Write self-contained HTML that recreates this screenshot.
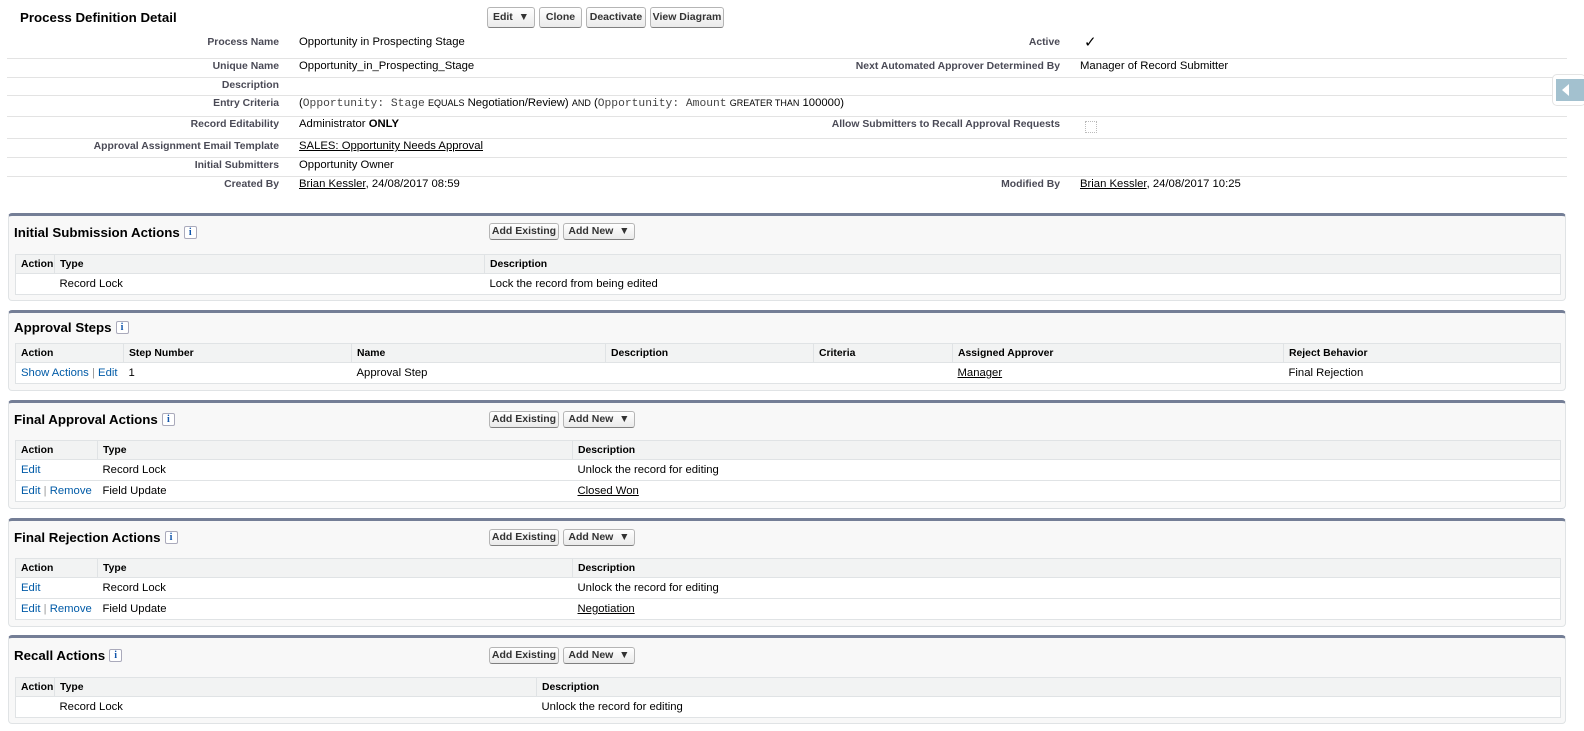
<!DOCTYPE html>
<html><head><meta charset="utf-8"><style>
*{box-sizing:border-box;margin:0;padding:0}
body{width:1584px;height:731px;background:#fff;font-family:"Liberation Sans",Arial,sans-serif;color:#000;position:relative;overflow:hidden;font-size:11.3px}
.a{position:absolute;white-space:nowrap}
.title{font-weight:bold;font-size:13.3px;color:#000}
.btn{position:absolute;height:21px;border:1px solid #b5b5b5;border-bottom-color:#7f7f7f;border-radius:3px;background:linear-gradient(#fff,#eaeaea);font-weight:bold;font-size:10.5px;color:#333;text-align:center;line-height:19px}
.sbtn{height:17px;line-height:15px}
.row{position:absolute;left:7px;width:1560px;border-bottom:1px solid #e3e3e3}
.lbl{position:absolute;text-align:right;font-weight:bold;font-size:10.4px;color:#4a4a56;white-space:nowrap}
.val{position:absolute;white-space:nowrap}
u{text-decoration:underline}
.mono{font-family:"Liberation Mono",monospace;font-size:11.3px;color:#444}
.sm{font-size:9px}
.sec{position:absolute;left:8px;width:1558px;background:#f8f8f8;border:1px solid #e0e3e5;border-top:3px solid #747e96;border-radius:4px}
.info{display:inline-block;width:13px;height:13px;border:1px solid #aab;border-radius:2px;background:#fff;color:#15a;font-family:"Liberation Serif",serif;font-size:10px;font-weight:bold;text-align:center;line-height:11px;vertical-align:2px;margin-left:4px}
table{position:absolute;left:6px;border-collapse:collapse;background:#fff;width:1546px;table-layout:fixed}
td,th{border-top:1px solid #e0e3e5;border-bottom:1px solid #e0e3e5;text-align:left;padding:0 0 0 5px;white-space:nowrap;overflow:hidden;font-size:11.3px}
th{background:#f2f3f3;font-weight:bold;font-size:10.4px;color:#000;height:19px;border-left:1px solid #e0e3e5}
th:first-child,td:first-child{border-left:1px solid #e0e3e5}
th:last-child,td:last-child{border-right:1px solid #e0e3e5}
td{height:21px}
a{color:#015ba7;text-decoration:none}
</style></head><body>

<div class="a title" style="left:20px;top:10px">Process Definition Detail</div>
<div class="btn" style="left:487px;top:7px;width:48px">Edit &nbsp;▼</div>
<div class="btn" style="left:539px;top:7px;width:43px">Clone</div>
<div class="btn" style="left:586px;top:7px;width:60px">Deactivate</div>
<div class="btn" style="left:650px;top:7px;width:74px">View Diagram</div>

<div class="row" style="top:31px;height:28px"></div>
<div class="row" style="top:59px;height:19px"></div>
<div class="row" style="top:78px;height:18px"></div>
<div class="row" style="top:96px;height:21px"></div>
<div class="row" style="top:117px;height:22px"></div>
<div class="row" style="top:139px;height:19px"></div>
<div class="row" style="top:158px;height:19px"></div>

<div class="lbl" style="right:1305px;top:37px">Process Name</div>
<div class="val" style="left:299px;top:36px">Opportunity in Prospecting Stage</div>
<div class="lbl" style="right:524px;top:37px">Active</div>
<div class="a" style="left:1084px;top:33px;font-size:15px">✓</div>

<div class="lbl" style="right:1305px;top:61px">Unique Name</div>
<div class="val" style="left:299px;top:60px">Opportunity_in_Prospecting_Stage</div>
<div class="lbl" style="right:524px;top:61px">Next Automated Approver Determined By</div>
<div class="val" style="left:1080px;top:60px">Manager of Record Submitter</div>

<div class="lbl" style="right:1305px;top:80px">Description</div>

<div class="lbl" style="right:1305px;top:98px">Entry Criteria</div>
<div class="val" style="left:299px;top:97px">(<span class="mono">Opportunity: Stage</span> <span class="sm">EQUALS</span> Negotiation/Review) <span class="sm">AND</span> (<span class="mono">Opportunity: Amount</span> <span class="sm">GREATER THAN</span> 100000)</div>

<div class="lbl" style="right:1305px;top:119px">Record Editability</div>
<div class="val" style="left:299px;top:118px">Administrator <b>ONLY</b></div>
<div class="lbl" style="right:524px;top:119px">Allow Submitters to Recall Approval Requests</div>
<div class="a" style="left:1085px;top:121px;width:12px;height:12px;border:1px dotted #bbb"></div>

<div class="lbl" style="right:1305px;top:141px">Approval Assignment Email Template</div>
<div class="val" style="left:299px;top:140px"><u>SALES: Opportunity Needs Approval</u></div>

<div class="lbl" style="right:1305px;top:160px">Initial Submitters</div>
<div class="val" style="left:299px;top:159px">Opportunity Owner</div>

<div class="lbl" style="right:1305px;top:179px">Created By</div>
<div class="val" style="left:299px;top:178px"><u>Brian Kessler</u>, 24/08/2017 08:59</div>
<div class="lbl" style="right:524px;top:179px">Modified By</div>
<div class="val" style="left:1080px;top:178px"><u>Brian Kessler</u>, 24/08/2017 10:25</div>

<div class="a" style="left:1552px;top:74px;width:34px;height:32px;background:#fff;border:1px solid #e4e4e4;border-radius:5px"></div>
<div class="a" style="left:1556px;top:79px;width:30px;height:22px;background:#a3c1cf"></div>
<div class="a" style="left:1562px;top:84px;width:0;height:0;border-top:6px solid transparent;border-bottom:6px solid transparent;border-right:7px solid #fff"></div>

<!-- Initial Submission -->
<div class="sec" style="top:213px;height:88px">
 <div class="a title" style="left:5px;top:9px;font-size:13.3px">Initial Submission Actions<span class="info">i</span></div>
 <div class="btn sbtn" style="left:480px;top:7px;width:70px">Add Existing</div>
 <div class="btn sbtn" style="left:554px;top:7px;width:72px">Add New &nbsp;▼</div>
 <table style="top:38px"><colgroup><col style="width:39px"><col style="width:430px"><col></colgroup>
 <tr><th>Action</th><th>Type</th><th>Description</th></tr>
 <tr><td></td><td>Record Lock</td><td>Lock the record from being edited</td></tr></table>
</div>

<!-- Approval Steps -->
<div class="sec" style="top:310px;height:81px">
 <div class="a title" style="left:5px;top:7px">Approval Steps<span class="info">i</span></div>
 <table style="top:30px"><colgroup><col style="width:108px"><col style="width:228px"><col style="width:254px"><col style="width:208px"><col style="width:139px"><col style="width:331px"><col></colgroup>
 <tr><th>Action</th><th>Step Number</th><th>Name</th><th>Description</th><th>Criteria</th><th>Assigned Approver</th><th>Reject Behavior</th></tr>
 <tr><td><a>Show Actions</a> <span style="color:#999">|</span> <a>Edit</a></td><td>1</td><td>Approval Step</td><td></td><td></td><td><u>Manager</u></td><td>Final Rejection</td></tr></table>
</div>

<!-- Final Approval -->
<div class="sec" style="top:400px;height:109px">
 <div class="a title" style="left:5px;top:9px">Final Approval Actions<span class="info">i</span></div>
 <div class="btn sbtn" style="left:480px;top:8px;width:70px">Add Existing</div>
 <div class="btn sbtn" style="left:554px;top:8px;width:72px">Add New &nbsp;▼</div>
 <table style="top:37px"><colgroup><col style="width:82px"><col style="width:475px"><col></colgroup>
 <tr><th>Action</th><th>Type</th><th>Description</th></tr>
 <tr><td><a>Edit</a></td><td>Record Lock</td><td>Unlock the record for editing</td></tr>
 <tr><td><a>Edit</a> <span style="color:#999">|</span> <a>Remove</a></td><td>Field Update</td><td><u>Closed Won</u></td></tr></table>
</div>

<!-- Final Rejection -->
<div class="sec" style="top:518px;height:109px">
 <div class="a title" style="left:5px;top:9px">Final Rejection Actions<span class="info">i</span></div>
 <div class="btn sbtn" style="left:480px;top:8px;width:70px">Add Existing</div>
 <div class="btn sbtn" style="left:554px;top:8px;width:72px">Add New &nbsp;▼</div>
 <table style="top:37px"><colgroup><col style="width:82px"><col style="width:475px"><col></colgroup>
 <tr><th>Action</th><th>Type</th><th>Description</th></tr>
 <tr><td><a>Edit</a></td><td>Record Lock</td><td>Unlock the record for editing</td></tr>
 <tr><td><a>Edit</a> <span style="color:#999">|</span> <a>Remove</a></td><td>Field Update</td><td><u>Negotiation</u></td></tr></table>
</div>

<!-- Recall -->
<div class="sec" style="top:635px;height:89px">
 <div class="a title" style="left:5px;top:10px">Recall Actions<span class="info">i</span></div>
 <div class="btn sbtn" style="left:480px;top:9px;width:70px">Add Existing</div>
 <div class="btn sbtn" style="left:554px;top:9px;width:72px">Add New &nbsp;▼</div>
 <table style="top:39px"><colgroup><col style="width:39px"><col style="width:482px"><col></colgroup>
 <tr><th>Action</th><th>Type</th><th>Description</th></tr>
 <tr><td></td><td>Record Lock</td><td>Unlock the record for editing</td></tr></table>
</div>

</body></html>
